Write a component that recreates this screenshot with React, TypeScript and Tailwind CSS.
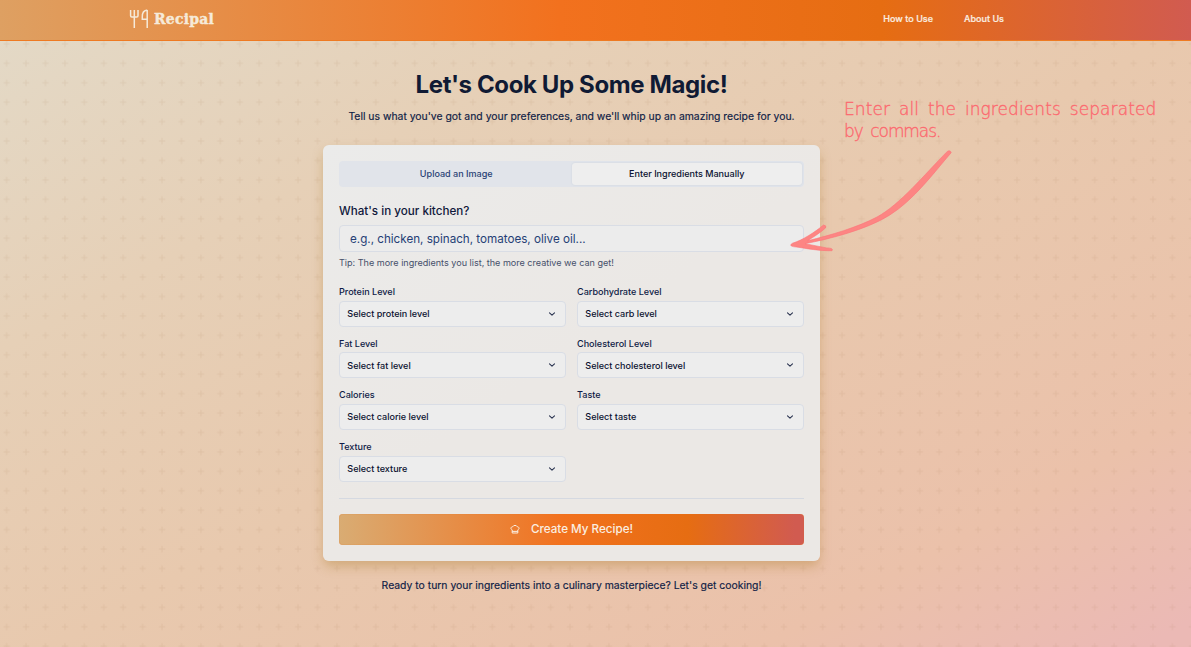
import React from "react";

const fields: [string, string][] = [
  ["Protein Level", "Select protein level"],
  ["Carbohydrate Level", "Select carb level"],
  ["Fat Level", "Select fat level"],
  ["Cholesterol Level", "Select cholesterol level"],
  ["Calories", "Select calorie level"],
  ["Taste", "Select taste"],
  ["Texture", "Select texture"],
];

function CrossPattern() {
  return (
    <svg className="pointer-events-none absolute inset-0 h-full w-full" aria-hidden="true">
      <defs>
        <pattern id="crosses" width="19.43" height="19.43" patternUnits="userSpaceOnUse" x="-3.1" y="-4.7">
          <path d="M6.5 9.7H13M9.7 6.5V13" stroke="#a07848" strokeOpacity="0.12" strokeWidth="1" />
        </pattern>
      </defs>
      <rect width="100%" height="100%" fill="url(#crosses)" />
    </svg>
  );
}

function Logo() {
  return (
    <div className="flex items-center text-[#f6ead9]">
      <svg width="20" height="20" viewBox="0 0 20 20" fill="none" stroke="currentColor" strokeWidth="1.5">
        <path d="M1.6 1v5.800q0 1.200 1.200 1.200h5q1.200 0 1.200-1.200V1M5.300 1v18M18.200 1v18M18.200 1.200h-.7q-4.200.6-4.200 6.300v2.800h4.900" />
      </svg>
      <span className="ml-[5px] font-['DejaVu_Serif_Condensed','DejaVu_Serif',serif] text-[15.5px] leading-5 font-bold [-webkit-text-stroke:0.4px_#f6ead9] tracking-[0.25px]">Recipal</span>
    </div>
  );
}

function Chevron() {
  return (
    <svg width="8" height="8" viewBox="0 0 8 8" fill="none" stroke="#26304d" strokeWidth="1.05" strokeLinecap="round" strokeLinejoin="round">
      <path d="M1.5 2.8 4 5.2 6.5 2.8" />
    </svg>
  );
}

function SelectField({ label, value }: { label: string; value: string }) {
  return (
    <div>
      <div className="h-[14.7px] text-[9.05px] leading-[12px] font-medium text-[#0f1b46]">{label}</div>
      <button className="flex h-[26px] w-full items-center justify-between rounded-[4px] border border-[#d9dde5] bg-[#ededed] pr-[9px] pl-[7.3px] text-[9.05px] font-medium text-[#0b1230]">
        <span>{value}</span>
        <Chevron />
      </button>
    </div>
  );
}

function Annotation() {
  return (
    <>
      <p className="absolute top-[98px] left-[844px] font-['DejaVu_Sans_Light','DejaVu_Sans',cursive] text-[17px] leading-[22px] font-extralight tracking-[0.08px] [word-spacing:3.4px] whitespace-nowrap text-[#fc6a70] [-webkit-text-stroke:0.35px_#fc6a70]">
        Enter all the ingredients separated
        <br />
        <span className="tracking-[-1.1px]">by commas.</span>
      </p>
      <svg className="absolute top-[148px] left-[788px]" width="166" height="106" viewBox="788 148 166 106" fill="#fd8583" stroke="#fb7478" strokeWidth="0.6" strokeLinejoin="round">
        <path d="M947.5 151.2Q950.500 149.800 951.200 152.700C934 172.500 914 200 889.500 215.200C866 230 829 239 805 243.700L826.500 247.900Q834 248 832 250.700C820 251 806 248.500 798 247.200Q787 246.500 792.500 243.200C803 240 815 232 823.500 225Q827 225.500 825.500 228C820 233 812 238 807.500 240.800C831 235 857 227.500 877 217C900 204.500 924 175 947.500 151.200Z" />
      </svg>
    </>
  );
}

export default function App() {
  return (
    <div className="relative h-[647px] w-full overflow-hidden bg-[linear-gradient(to_bottom_right,#e3dac8_0%,#e6d0b7_27%,#e8c9ae_52%,#ebc1aa_82%,#ebb9b5_98%)] font-['Inter',sans-serif]">
      <CrossPattern />
      <header className="relative h-[41px] border-b border-[#ee7a22] bg-[linear-gradient(90deg,#dea062_0%,#f2711e_47%,#e66d12_74%,#d15b50_100%)]">
        <div className="flex h-[37px] w-[1004px] items-center justify-between pl-[129px]">
          <Logo />
          <nav className="flex gap-[31px] text-[9.05px] font-medium text-[#faeee1] [-webkit-text-stroke:0.2px_#faeee1]">
            <a>How to Use</a>
            <a>About Us</a>
          </nav>
        </div>
      </header>

      <main className="relative flex w-[1143px] flex-col items-center">
        <h1 className="mt-[28px] text-[24px] leading-8 font-bold tracking-[-0.38px] text-[#101a34]">Let's Cook Up Some Magic!</h1>
        <p className="mt-[8px] text-[10.4px] leading-4 text-[#0d1b44] [-webkit-text-stroke:0.15px_#0d1b44]">
          Tell us what you've got and your preferences, and we'll whip up an amazing recipe for you.
        </p>

        <section className="mt-[20px] h-[416px] w-[497px] rounded-[6px] bg-[linear-gradient(145deg,#ebebea,#ebe8e5_50%)] px-4 pt-4 shadow-[0_6px_12px_-1px_rgba(160,110,20,0.34)]">
          <div className="grid h-[26px] grid-cols-2 items-center rounded-[4px] bg-[#e1e4ea] p-[2px] text-center text-[9.05px] font-medium">
            <span className="text-[#294275]">Upload an Image</span>
            <span className="rounded-[3px] bg-[#eeeeee] py-[4px] leading-[14px] text-[#0b1230] shadow-[0_0_2px_#c8d0dc]">Enter Ingredients Manually</span>
          </div>

          <h2 className="mt-[16px] text-[11.65px] leading-4 font-medium text-[#10183b]">What's in your kitchen?</h2>
          <div className="mt-[6px] flex h-[27px] items-center rounded-[4px] border border-[#d9dde5] bg-[#ececec] pt-[2px] pl-[10px] text-[11.65px] text-[#263f76]">
            e.g., chicken, spinach, tomatoes, olive oil...
          </div>
          <p className="mt-[5px] text-[9.05px] leading-3 text-[#46506a]">Tip: The more ingredients you list, the more creative we can get!</p>

          <div className="mt-[17px] grid grid-cols-2 gap-x-[11px] gap-y-[11px]">
            {fields.map(([label, value]) => (
              <SelectField key={label} label={label} value={value} />
            ))}
          </div>

          <hr className="mt-[16.200px] border-[#d5d9e1]" />
          <button className="mt-[15px] flex h-[31px] w-full items-center justify-center rounded-[4px] bg-[linear-gradient(90deg,#d9ac73_0%,#f2711e_48%,#e66d12_75%,#d15b50_98%)] text-[11.65px] font-medium text-[#faeee1] shadow-[inset_0_0_1px_#e4711c]">
            <svg className="mr-[11px]" width="10" height="10" viewBox="0 0 10 10" fill="none" stroke="currentColor" strokeWidth="1" strokeLinejoin="round">
              <path d="M2.2 9V5.900C.2 4.900.8 2.900 2.600 2.800 3.600.9 6.400.9 7.400 2.800 9.200 2.900 9.800 4.900 7.800 5.900V9ZM2.200 7.400H7.800" />
            </svg>
            Create My Recipe!
          </button>
        </section>

        <p className="mt-[17px] text-[10.4px] leading-4 text-[#0d1b44] [-webkit-text-stroke:0.15px_#0d1b44]">
          Ready to turn your ingredients into a culinary masterpiece? Let's get cooking!
        </p>
      </main>

      <Annotation />
    </div>
  );
}
